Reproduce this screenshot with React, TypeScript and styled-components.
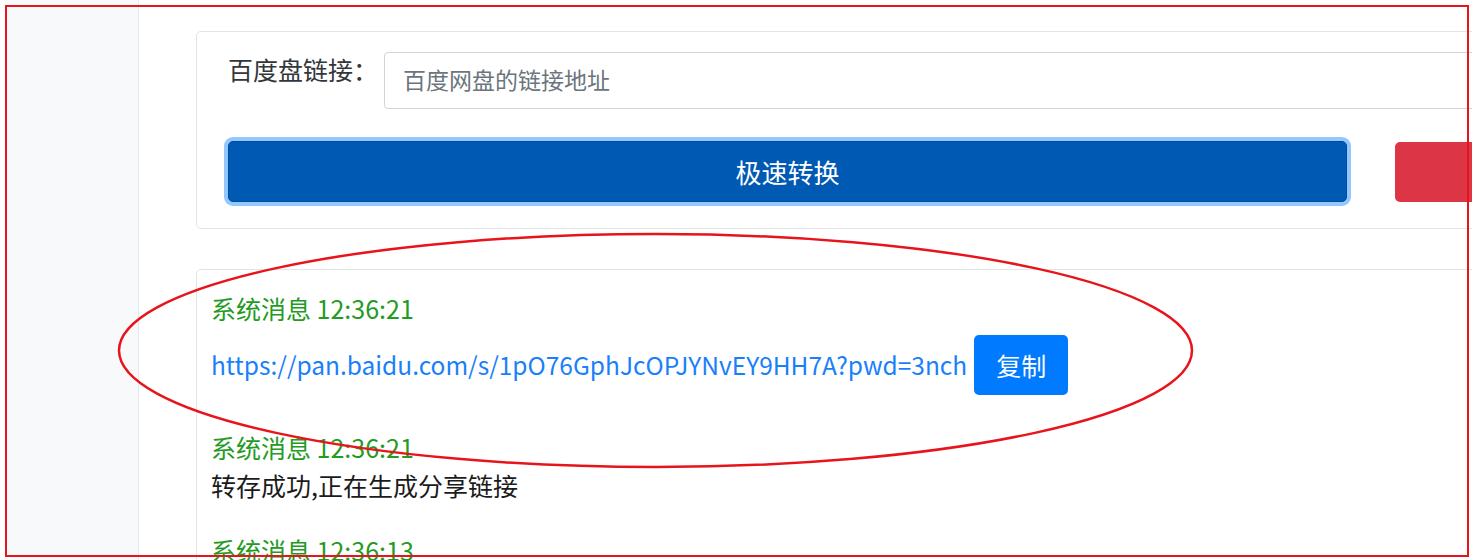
import React from "react";
import styled, { createGlobalStyle } from "styled-components";

const GlobalStyle = createGlobalStyle`
  html, body {
    margin: 0;
    padding: 0;
    overflow: hidden;
    background: #ffffff;
  }
  body {
    font-family: "Noto Sans CJK SC", "Noto Sans", sans-serif;
    color: #212529;
  }
  * { box-sizing: border-box; }
`;

const Page = styled.div`
  position: relative;
  display: flex;
  width: 1472px;
  height: 560px;
  padding-left: 5px;
  overflow: hidden;
  background: #ffffff;
`;

const Sidebar = styled.aside`
  flex: 0 0 134px;
  background: #f8f9fa;
  border-right: 1px solid #e6e9ec;
`;

const Main = styled.main`
  flex: 1;
  min-width: 0;
  padding: 31px 0 0 57px;
  overflow: hidden;
`;

const Card = styled.section`
  width: 1420px;
  background: #ffffff;
  border: 1px solid #e2e3e5;
  border-radius: 5px;
`;

const FormCard = styled(Card)`
  padding: 20px 0 26px 31px;
`;

const FieldRow = styled.div`
  display: flex;
  align-items: flex-start;
`;

const FieldLabel = styled.label`
  flex: 0 0 156px;
  font-size: 25px;
  line-height: 34px;
  color: #33373b;
`;

const TextInput = styled.input`
  flex: 1;
  height: 57px;
  padding: 0 18px 3px;
  border: 1px solid #ced4da;
  border-radius: 4px;
  font-family: inherit;
  font-size: 23px;
  color: #495057;
  background: #ffffff;
  outline: none;
  &::placeholder {
    color: #6c757d;
  }
`;

const ActionRow = styled.div`
  display: flex;
  align-items: flex-start;
  gap: 48px;
  margin-top: 32px;
`;

const ConvertButton = styled.button`
  flex: 0 0 1119px;
  height: 61px;
  border: 1px solid #004c99;
  border-radius: 5px;
  background: #0059b3;
  box-shadow: 0 0 0 4px rgba(38, 143, 255, 0.5);
  color: #ffffff;
  font-family: inherit;
  font-size: 26px;
  line-height: 1;
  cursor: pointer;
`;

const DangerButton = styled.button`
  flex: 0 0 200px;
  height: 60px;
  margin-top: 1px;
  border: none;
  border-radius: 5px;
  background: #dc3545;
  color: #ffffff;
  font-family: inherit;
  font-size: 26px;
`;

const LogCard = styled(Card)`
  margin-top: 40px;
  padding: 19px 0 0 14px;
`;

const Message = styled.div`
  margin-bottom: 27px;
`;

const MsgHeader = styled.div`
  color: #239b23;
  font-size: 25px;
  line-height: 38px;
`;

const MsgBody = styled.div`
  color: #1b1b1b;
  font-size: 25px;
  line-height: 38px;
`;

const LinkRow = styled.div`
  display: flex;
  align-items: center;
  gap: 7px;
  padding: 8px 0 6px;
`;

const LinkText = styled.a`
  color: #1a7ffa;
  font-size: 24.5px;
  line-height: 38px;
  text-decoration: none;
  white-space: nowrap;
`;

const CopyButton = styled.button`
  flex: 0 0 94px;
  height: 60px;
  border: none;
  border-radius: 5px;
  background: #007bff;
  color: #ffffff;
  font-family: inherit;
  font-size: 25px;
  line-height: 1;
  cursor: pointer;
`;

const Annotation = styled.svg`
  position: absolute;
  left: 0;
  top: 0;
  pointer-events: none;
`;

const messages = [
  { time: "12:36:21", kind: "link" as const, text: "https://pan.baidu.com/s/1pO76GphJcOPJYNvEY9HH7A?pwd=3nch" },
  { time: "12:36:21", kind: "text" as const, text: "转存成功,正在生成分享链接" },
  { time: "12:36:13", kind: "text" as const, text: "正在解析链接" },
];

export default function App() {
  return (
    <>
      <GlobalStyle />
      <Page>
        <Sidebar />
        <Main>
          <FormCard>
            <FieldRow>
              <FieldLabel>百度盘链接：</FieldLabel>
              <TextInput placeholder="百度网盘的链接地址" />
            </FieldRow>
            <ActionRow>
              <ConvertButton>极速转换</ConvertButton>
              <DangerButton />
            </ActionRow>
          </FormCard>
          <LogCard>
            {messages.map((m, i) => (
              <Message key={i}>
                <MsgHeader>系统消息 {m.time}</MsgHeader>
                {m.kind === "link" ? (
                  <LinkRow>
                    <LinkText href="#">{m.text}</LinkText>
                    <CopyButton>复制</CopyButton>
                  </LinkRow>
                ) : (
                  <MsgBody>{m.text}</MsgBody>
                )}
              </Message>
            ))}
          </LogCard>
        </Main>
        <Annotation width="1472" height="560" viewBox="0 0 1472 560">
          <rect x="6" y="6" width="1462" height="550" fill="none" stroke="#e8141c" strokeWidth="2" />
          <ellipse cx="655.5" cy="350.5" rx="536.5" ry="116.5" fill="none" stroke="#e8141c" strokeWidth="2.5" />
        </Annotation>
      </Page>
    </>
  );
}
